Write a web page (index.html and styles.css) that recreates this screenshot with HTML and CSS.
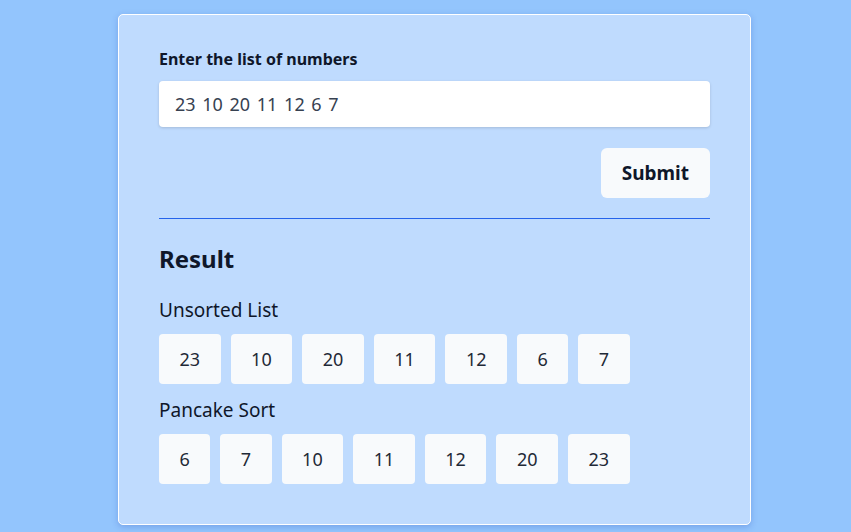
FILE: index.html
```html
<!DOCTYPE html>
<html>
<head>
<meta charset="utf-8">
<link rel="stylesheet" href="styles.css">
</head>
<body>
<div class="card">
  <form class="form">
    <label class="label" for="nums">Enter the list of numbers</label>
    <input class="input" id="nums" type="text" value="23 10 20 11 12 6 7">
    <div class="actions"><button class="btn" type="button">Submit</button></div>
  </form>
  <hr class="rule">
  <h2 class="title">Result</h2>
  <div class="section">
    <h3 class="subtitle">Unsorted List</h3>
    <div class="chips">
      <span class="chip">23</span><span class="chip">10</span><span class="chip">20</span><span class="chip">11</span><span class="chip">12</span><span class="chip">6</span><span class="chip">7</span>
    </div>
  </div>
  <div class="section">
    <h3 class="subtitle">Pancake Sort</h3>
    <div class="chips">
      <span class="chip">6</span><span class="chip">7</span><span class="chip">10</span><span class="chip">11</span><span class="chip">12</span><span class="chip">20</span><span class="chip">23</span>
    </div>
  </div>
</div>
</body>
</html>
```
FILE: styles.css
```css
* { box-sizing: border-box; }
html, body { margin: 0; padding: 0; }
body {
  background: #93c5fd;
  font-family: "Noto Sans", "Open Sans", sans-serif;
  color: #0f172a;
  padding-top: 14px;
  height: 532px;
  overflow: hidden;
}
.card {
  width: 633px;
  margin-left: 118px;
  background: #bfdbfe;
  border: 1px solid #ffffff;
  border-radius: 5px;
  box-shadow: 0 2px 6px rgba(30, 64, 175, 0.25);
  padding: 32px 40px 40px 40px;
}
.form { display: flex; flex-direction: column; }
.label {
  font-weight: 700;
  font-size: 16px;
  line-height: 24px;
  margin-bottom: 10px;
}
.input {
  height: 46px;
  border: none;
  border-radius: 4px;
  background: #fff;
  box-shadow: 0 1px 3px rgba(0, 0, 0, 0.15);
  padding: 0 16px;
  font-family: inherit;
  font-size: 18px;
  word-spacing: 2px;
  color: #374151;
  outline: none;
}
.actions { display: flex; justify-content: flex-end; margin-top: 21px; }
.btn {
  height: 50px;
  padding: 0 21px;
  border: none;
  border-radius: 6px;
  background: #f8fafc;
  font-family: inherit;
  font-weight: 700;
  font-size: 19px;
  color: #0f172a;
}
.rule {
  margin: 20px 0 0;
  border: none;
  border-top: 1px solid #2563eb;
}
.title {
  margin: 24px 0 0;
  font-size: 24px;
  line-height: 32px;
  font-weight: 700;
}
.section { margin-top: 23px; }
.section + .section { margin-top: 14px; }
.subtitle {
  margin: 0 0 12px;
  font-size: 19px;
  line-height: 24px;
  font-weight: 400;
}
.chips { display: flex; gap: 10px; }
.chip {
  height: 50px;
  min-width: 50px;
  padding: 0 20.5px;
  display: flex;
  align-items: center;
  justify-content: center;
  background: #f8fafc;
  border-radius: 4px;
  font-size: 18px;
  color: #1f2937;
}
```
